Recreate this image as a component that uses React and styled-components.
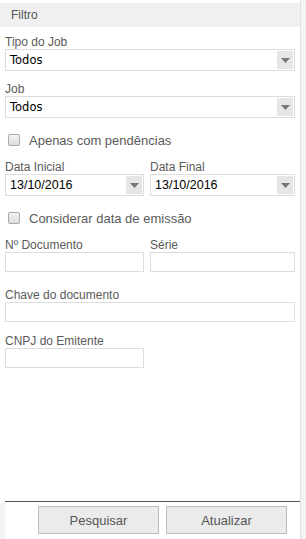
import React from 'react'
import styled, { createGlobalStyle } from 'styled-components'

const Global = createGlobalStyle`
  html, body {
    margin: 0;
    padding: 0;
    background: #fff;
  }
  body {
    font-family: "Liberation Sans", Arial, sans-serif;
    color: #555;
  }
`

const App = () => {
  return (
    <Page>
      <Global />
      <Panel>
        <Body>
          <Header>Filtro</Header>
          <Form>
            <Field>
              <Label>Tipo do Job</Label>
              <Select value="Todos" />
            </Field>
            <Field>
              <Label>Job</Label>
              <Select value="Todos" />
            </Field>
            <Check label="Apenas com pendências" />
            <Row>
              <Field>
                <Label>Data Inicial</Label>
                <Select value="13/10/2016" date />
              </Field>
              <Field>
                <Label>Data Final</Label>
                <Select value="13/10/2016" date />
              </Field>
            </Row>
            <Check label="Considerar data de emissão" />
            <Row>
              <Field $gap={16}>
                <Label>Nº Documento</Label>
                <Input />
              </Field>
              <Field $gap={16}>
                <Label>Série</Label>
                <Input />
              </Field>
            </Row>
            <Field $gap={12}>
              <Label>Chave do documento</Label>
              <Input />
            </Field>
            <Row>
              <Field>
                <Label>CNPJ do Emitente</Label>
                <Input />
              </Field>
              <div />
            </Row>
          </Form>
        </Body>
        <Footer>
          <FooterInner>
            <Button>Pesquisar</Button>
            <Button>Atualizar</Button>
          </FooterInner>
        </Footer>
      </Panel>
      <Scroll />
    </Page>
  )
}

const Select = ({ value, date }) => (
  <SelectBox>
    <SelectText $date={date}>{value}</SelectText>
    <Arrow>
      <svg width="9" height="5" viewBox="0 0 9 5">
        <path d="M0 0 H9 L4.5 5 Z" fill="#777" />
      </svg>
    </Arrow>
  </SelectBox>
)

const Check = ({ label }) => (
  <CheckRow>
    <Box />
    <span>{label}</span>
  </CheckRow>
)

const Page = styled.div`
  display: flex;
  width: 306px;
  height: 539px;
  overflow: hidden;
`
const Panel = styled.div`
  width: 300px;
  display: flex;
  flex-direction: column;
`
const Scroll = styled.div`
  width: 5px;
  border-left: 1px solid #e2e2e2;
  background: #f3f3f3;
`
const Body = styled.div`
  flex: 1;
  padding-top: 3px;
`
const Header = styled.div`
  height: 24px;
  line-height: 24px;
  background: #f0f0f0;
  padding-left: 11px;
  font-size: 12px;
  color: #555;
`
const Form = styled.div`
  padding: 8px 5px 0 5px;
  display: flex;
  flex-direction: column;
`
const Field = styled.div`
  display: flex;
  flex-direction: column;
  margin-bottom: ${p => p.$gap || 11}px;
`
const Row = styled.div`
  display: grid;
  grid-template-columns: 139px 145px;
  column-gap: 6px;
`
const Label = styled.div`
  font-size: 12px;
  line-height: 14px;
  color: #5a5a5a;
`
const SelectBox = styled.div`
  height: 20px;
  border: 1px solid #ddd;
  display: flex;
  align-items: center;
  justify-content: space-between;
  padding: 0 1px 0 4px;
  background: #fff;
`
const SelectText = styled.span`
  font-family: ${p => (p.$date ? '"Liberation Sans", Arial' : '"DejaVu Sans", Tahoma')}, sans-serif;
  font-size: ${p => (p.$date ? '12.5px' : '11.5px')};
  color: #000;
`
const Arrow = styled.div`
  width: 16px;
  height: 18px;
  background: #e6e6e6;
  display: flex;
  align-items: center;
  justify-content: center;
`
const Input = styled.div`
  height: 18px;
  border: 1px solid #ddd;
  background: #fff;
`
const CheckRow = styled.div`
  display: flex;
  align-items: center;
  gap: 9px;
  height: 16px;
  margin: 3px 0 12px 3px;
  font-size: 13px;
  color: #5a5a5a;
`
const Box = styled.div`
  width: 10px;
  height: 10px;
  border: 1px solid #aaa;
  border-radius: 2px;
  background: linear-gradient(#f4f4f4, #dcdcdc);
`
const Footer = styled.div`
  box-sizing: border-box;
  height: 38px;
  border-top: 1px solid #555;
  margin-left: 5px;
  padding-top: 1px;
`
const FooterInner = styled.div`
  box-sizing: border-box;
  height: 36px;
  margin-left: -5px;
  padding: 3px 0 0 38px;
  background: linear-gradient(to right, #f3f3f3 5px, #fff 5px);
  display: flex;
  gap: 7px;
`
const Button = styled.div`
  width: 119px;
  height: 26px;
  border: 1px solid #bbb;
  background: #ebebeb;
  font-size: 13px;
  color: #555;
  display: flex;
  align-items: center;
  justify-content: center;
`

export default App
